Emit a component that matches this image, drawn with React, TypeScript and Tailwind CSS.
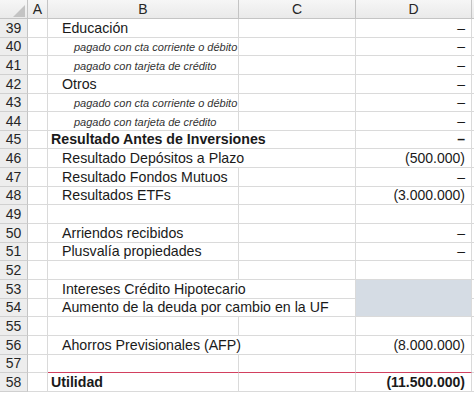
import React from 'react';

type Row = {
  n: number;
  label?: string;
  kind?: 'normal' | 'sub' | 'bold';
  value?: string;
  wide?: boolean;
  shaded?: boolean;
  redTop?: boolean;
};

const rows: Row[] = [
  { n: 39, label: 'Educación', value: '–' },
  { n: 40, label: 'pagado con cta corriente o débito', kind: 'sub', value: '–' },
  { n: 41, label: 'pagado con tarjeta de crédito', kind: 'sub', value: '–' },
  { n: 42, label: 'Otros', value: '–' },
  { n: 43, label: 'pagado con cta corriente o débito', kind: 'sub', value: '–' },
  { n: 44, label: 'pagado con tarjeta de crédito', kind: 'sub', value: '–' },
  { n: 45, label: 'Resultado Antes de Inversiones', kind: 'bold', value: '–', wide: true },
  { n: 46, label: 'Resultado Depósitos a Plazo', value: '(500.000)', wide: true },
  { n: 47, label: 'Resultado Fondos Mutuos', value: '–' },
  { n: 48, label: 'Resultados ETFs', value: '(3.000.000)' },
  { n: 49 },
  { n: 50, label: 'Arriendos recibidos', value: '–' },
  { n: 51, label: 'Plusvalía propiedades', value: '–' },
  { n: 52 },
  { n: 53, label: 'Intereses Crédito Hipotecario', wide: true, shaded: true },
  { n: 54, label: 'Aumento de la deuda por cambio en la UF', wide: true, shaded: true },
  { n: 55 },
  { n: 56, label: 'Ahorros Previsionales (AFP)', value: '(8.000.000)', wide: true },
  { n: 57 },
  { n: 58, label: 'Utilidad', kind: 'bold', value: '(11.500.000)', redTop: true },
];

const cols = 'grid grid-cols-[28px_20px_191px_117px_116px_2px]';

const Label: React.FC<{ row: Row }> = ({ row }) => {
  if (!row.label) return null;
  if (row.kind === 'sub')
    return <span className="pl-[26px] text-[11px] leading-[13px] italic text-[#333]">{row.label}</span>;
  if (row.kind === 'bold')
    return <span className="pl-[3px] text-[14.2px] leading-[16px] font-bold text-[#1a1a1a]">{row.label}</span>;
  return <span className="pl-[14px] text-[14.2px] leading-[16px] text-[#1a1a1a]">{row.label}</span>;
};

const SheetRow: React.FC<{ row: Row; next?: Row }> = ({ row, next }) => {
  const lineB = next?.redTop ? 'border-b-[#d2405f]' : 'border-b-[#dadada]';
  return (
    <div className={`${cols} h-[18.65px]`}>
      <div className="flex items-end justify-center pb-px bg-[#ededed] border-r border-b border-r-[#c4c4c4] border-b-[#d0d0d0] text-[14px] leading-[16px] text-[#262626]">
        {row.n}
      </div>
      <div className="border-r border-b border-[#dadada]" />
      <div
        className={`flex items-end pb-px whitespace-nowrap overflow-visible border-b border-r ${lineB} border-r-[#dadada] ${
          row.wide ? 'col-span-2' : ''
        }`}
      >
        <Label row={row} />
      </div>
      {!row.wide && <div className={`border-b border-r ${lineB} border-r-[#dadada]`} />}
      <div
        className={`flex items-end justify-end pb-px pr-[6px] border-b border-r ${
          row.shaded ? 'bg-[#d5dce4] border-r-[#dadada]' : 'border-r-[#dadada]'
        } ${row.shaded && next?.shaded ? 'border-b-[#d5dce4]' : lineB} text-[14px] leading-[16px] text-[#1a1a1a] ${
          row.kind === 'bold' ? 'font-bold' : ''
        }`}
      >
        {row.value}
      </div>
      <div className="border-b border-[#dadada]" />
    </div>
  );
};

const App = () => {
  return (
    <div className="w-[474px] h-[395px] overflow-hidden bg-white font-['Liberation_Sans',Arial,sans-serif]">
      <div className={`${cols} h-[19px] bg-gradient-to-b from-[#f6f6f6] to-[#e9e9e9] text-[14px] leading-[16px] text-[#262626]`}>
        <div className="relative border-r border-b border-[#c4c4c4]">
          <svg className="absolute left-0 top-0" width="28" height="19" viewBox="0 0 28 19">
            <polygon points="25,5 25,17 13,17" fill="#c3c3c3" />
          </svg>
        </div>
        <div className="flex items-end justify-center pb-px border-r border-b border-[#c4c4c4]">A</div>
        <div className="flex items-end justify-center pb-px border-r border-b border-[#c4c4c4]">B</div>
        <div className="flex items-end justify-center pb-px border-r border-b border-[#c4c4c4]">C</div>
        <div className="flex items-end justify-center pb-px border-r border-b border-[#c4c4c4]">D</div>
        <div className="border-b border-[#c4c4c4]" />
      </div>
      {rows.map((r, i) => (
        <SheetRow key={r.n} row={r} next={rows[i + 1]} />
      ))}
    </div>
  );
};

export default App;
